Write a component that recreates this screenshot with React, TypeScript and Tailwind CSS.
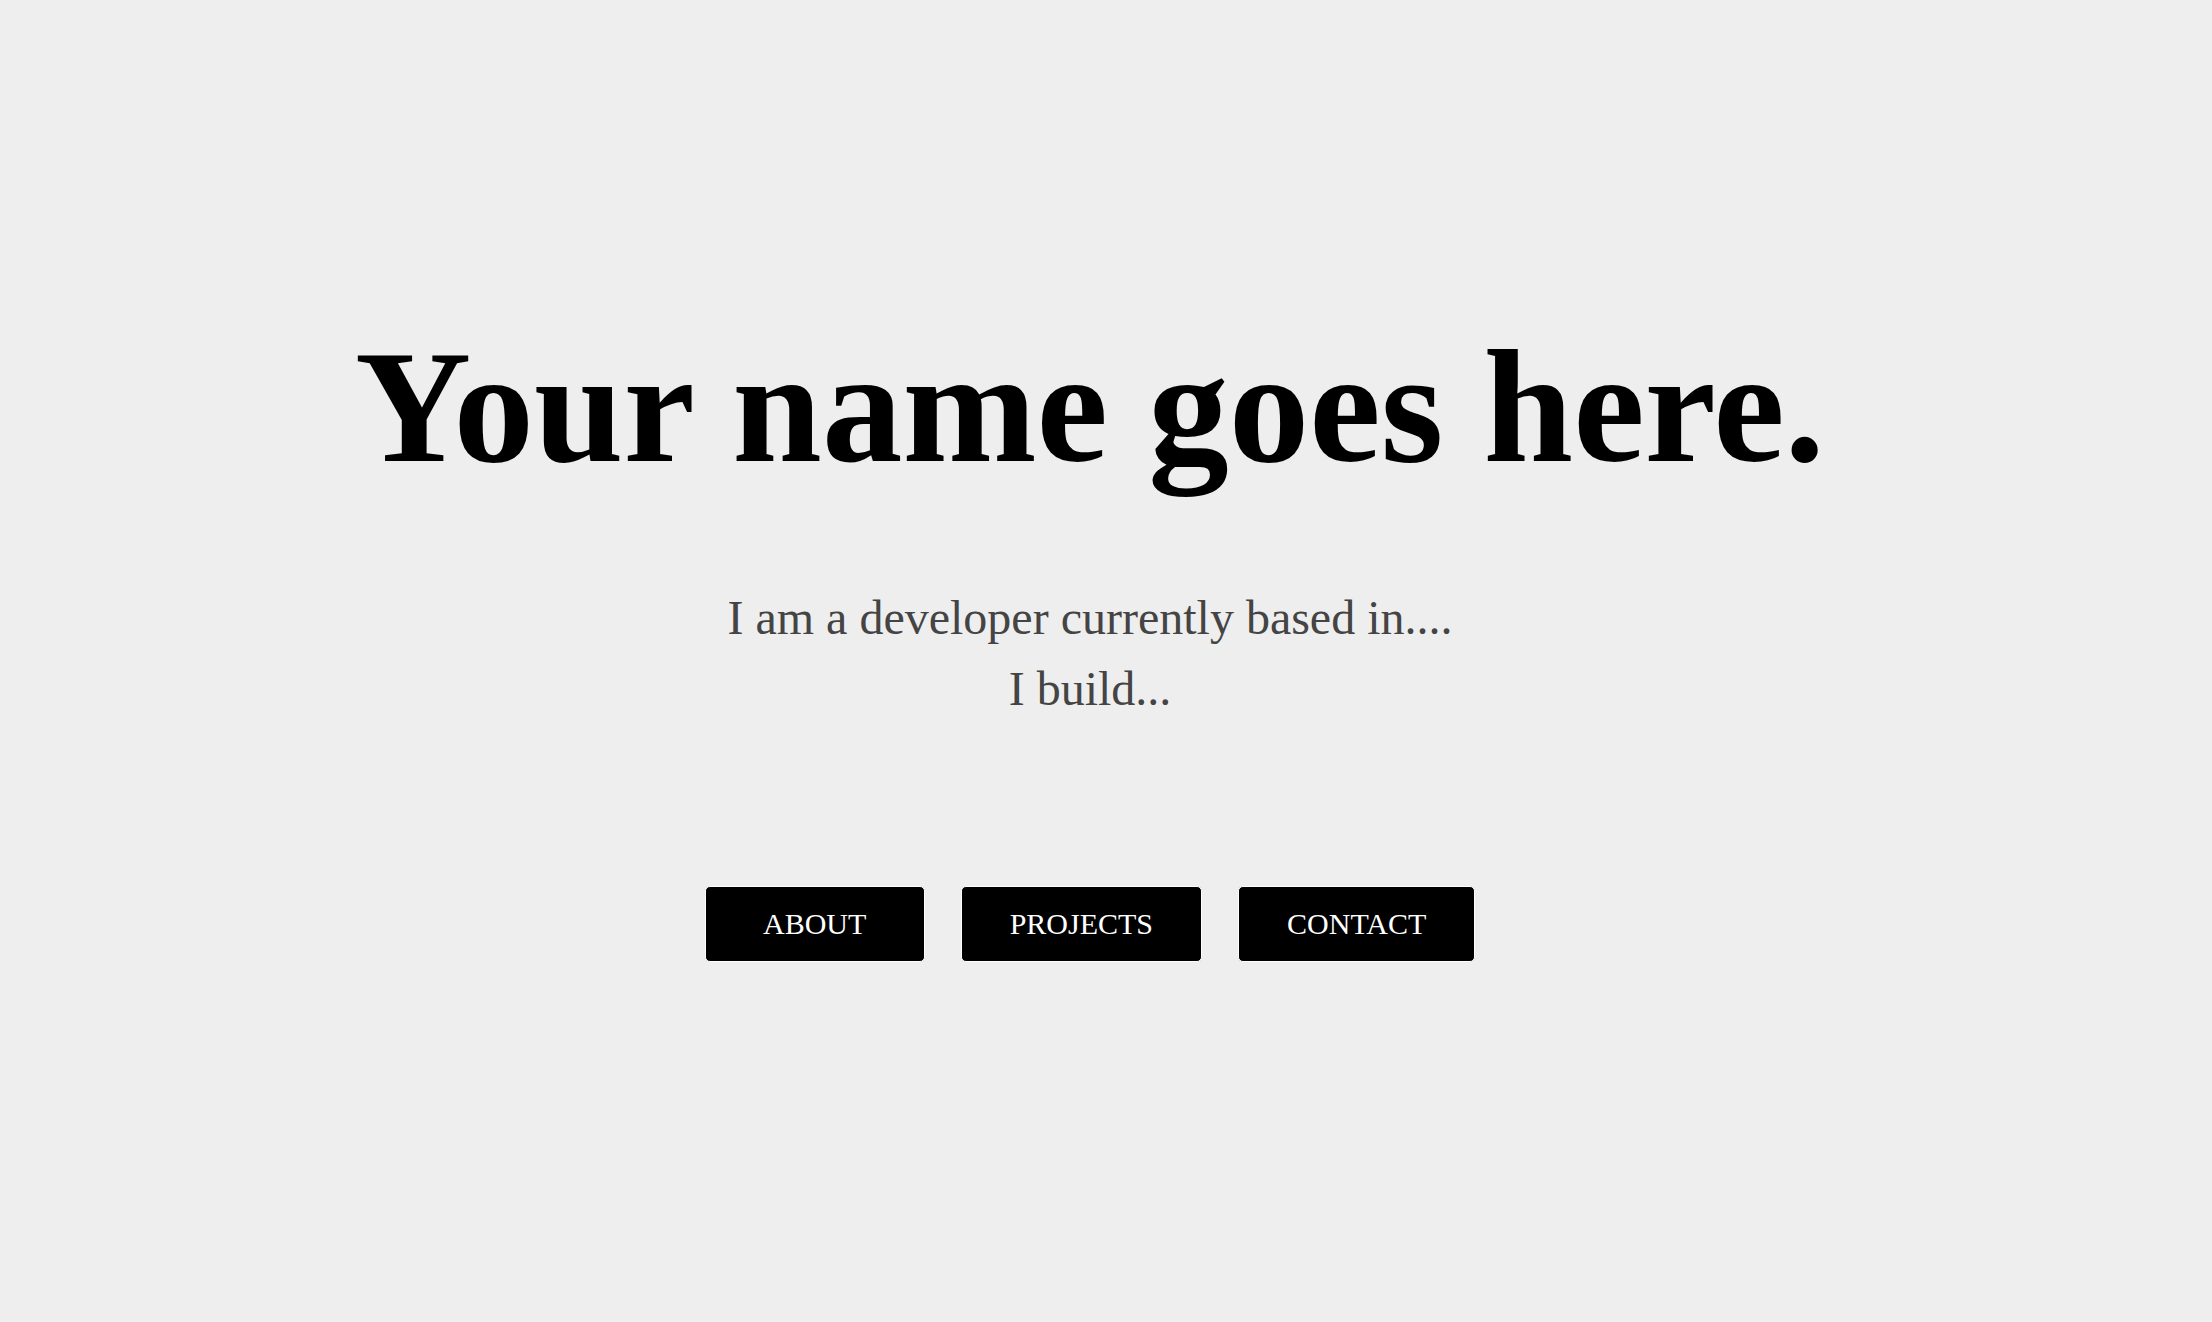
import React from 'react';

const links = ['ABOUT', 'PROJECTS', 'CONTACT'];

const App = () => {
  return (
    <main
      className="min-h-screen w-full bg-[#eeeeee] pr-8 pt-[327px] flex flex-col items-center text-center"
      style={{ fontFamily: '"Liberation Serif", "Times New Roman", serif' }}
    >
      {/* Hero heading */}
      <h1 className="text-[161px] leading-[160px] font-bold text-black">Your name goes here.</h1>

      <p className="mt-[95px] text-[48px] leading-[71px] text-[#444444]">
        I am a developer currently based in....
        <br />
        I build...
      </p>

      {/* Nav buttons */}
      <nav className="mt-[162px] flex gap-9">
        {links.map((label) => (
          <a
            key={label}
            href="#"
            className="h-[76px] min-w-[220px] px-12 flex items-center justify-center rounded-[5px] border border-white bg-black text-[30px] leading-[36px] text-white"
          >
            {label}
          </a>
        ))}
      </nav>
    </main>
  );
};

export default App;
